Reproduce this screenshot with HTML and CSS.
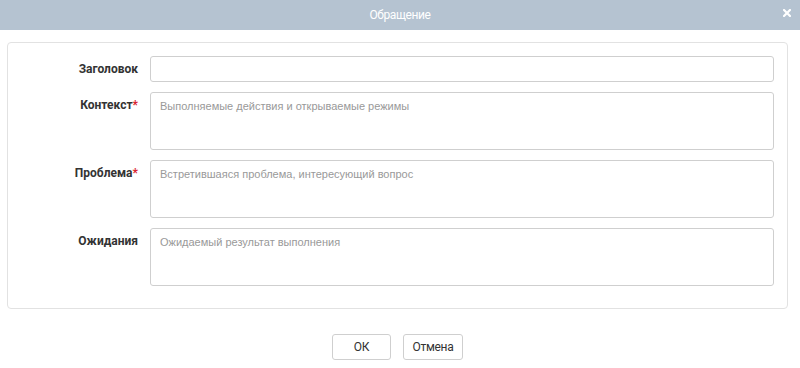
FILE: index.html
```html
<!DOCTYPE html>
<html lang="ru">
<head>
  <meta charset="UTF-8" />
  <meta name="viewport" content="width=device-width, initial-scale=1.0"/>
  <title>Обращение</title>
  <link rel="stylesheet" href="styles.css">
</head>
<body>
  <div class="dialog">
    <div class="dialog-header">
      <span class="dialog-title">Обращение</span>
      <span class="close-btn">
        <svg width="8" height="8" viewBox="0 0 8 8">
          <path d="M1 1 L7 7 M7 1 L1 7" stroke="#fff" stroke-width="2.2" stroke-linecap="square"/>
        </svg>
      </span>
    </div>

    <div class="panel">
      <div class="row">
        <label class="label">Заголовок</label>
        <input type="text" class="field" />
      </div>
      <div class="row">
        <label class="label">Контекст<span class="req">*</span></label>
        <textarea class="field area" placeholder="Выполняемые действия и открываемые режимы"></textarea>
      </div>
      <div class="row">
        <label class="label">Проблема<span class="req">*</span></label>
        <textarea class="field area" placeholder="Встретившаяся проблема, интересующий вопрос"></textarea>
      </div>
      <div class="row">
        <label class="label">Ожидания</label>
        <textarea class="field area" placeholder="Ожидаемый результат выполнения"></textarea>
      </div>
    </div>

    <div class="buttons">
      <button class="btn btn-ok">ОК</button>
      <button class="btn btn-cancel">Отмена</button>
    </div>
  </div>
</body>
</html>
```

FILE: styles.css
```css
body {
  margin: 0;
  font-family: Roboto, "Liberation Sans", Arial, sans-serif;
  font-size: 12px;
  background-color: #fff;
  color: #333;
}

.dialog-header {
  position: relative;
  height: 30px;
  background-color: #b5c3d1;
  display: flex;
  align-items: center;
  justify-content: center;
}

.dialog-title {
  color: #fff;
  font-size: 12px;
  letter-spacing: -0.4px;
}

.close-btn {
  position: absolute;
  right: 9px;
  top: 9px;
  line-height: 0;
}

.panel {
  margin: 12px 12px 0 7px;
  padding: 13px 13px 22px 0;
  border: 1px solid #e2e2e2;
  border-radius: 4px;
  display: flex;
  flex-direction: column;
  gap: 10px;
}

.row {
  display: flex;
  gap: 12px;
}

.label {
  width: 130px;
  flex-shrink: 0;
  text-align: right;
  font-weight: bold;
  line-height: 14px;
  padding-top: 6px;
  color: #333;
}

.req {
  color: #d9232e;
}

.field {
  flex: 1;
  box-sizing: border-box;
  height: 26px;
  margin: 0;
  padding: 6px 9px 5px;
  border: 1px solid #cfcfcf;
  border-radius: 3px;
  font-family: "Liberation Sans", Arial, sans-serif;
  font-size: 11px;
  line-height: 14px;
  color: #333;
  outline: none;
}

.area {
  height: 58px;
  resize: none;
}

.field::placeholder {
  color: #999;
}

.buttons {
  display: flex;
  justify-content: center;
  gap: 12px;
  margin-top: 25px;
  padding-right: 5px;
}

.btn {
  height: 26px;
  background-color: #fff;
  border: 1px solid #cfcfcf;
  border-radius: 3px;
  font-family: inherit;
  font-size: 12px;
  letter-spacing: -0.3px;
  color: #333;
  cursor: pointer;
}

.btn-ok {
  width: 59px;
}

.btn-cancel {
  width: 60px;
}
```
